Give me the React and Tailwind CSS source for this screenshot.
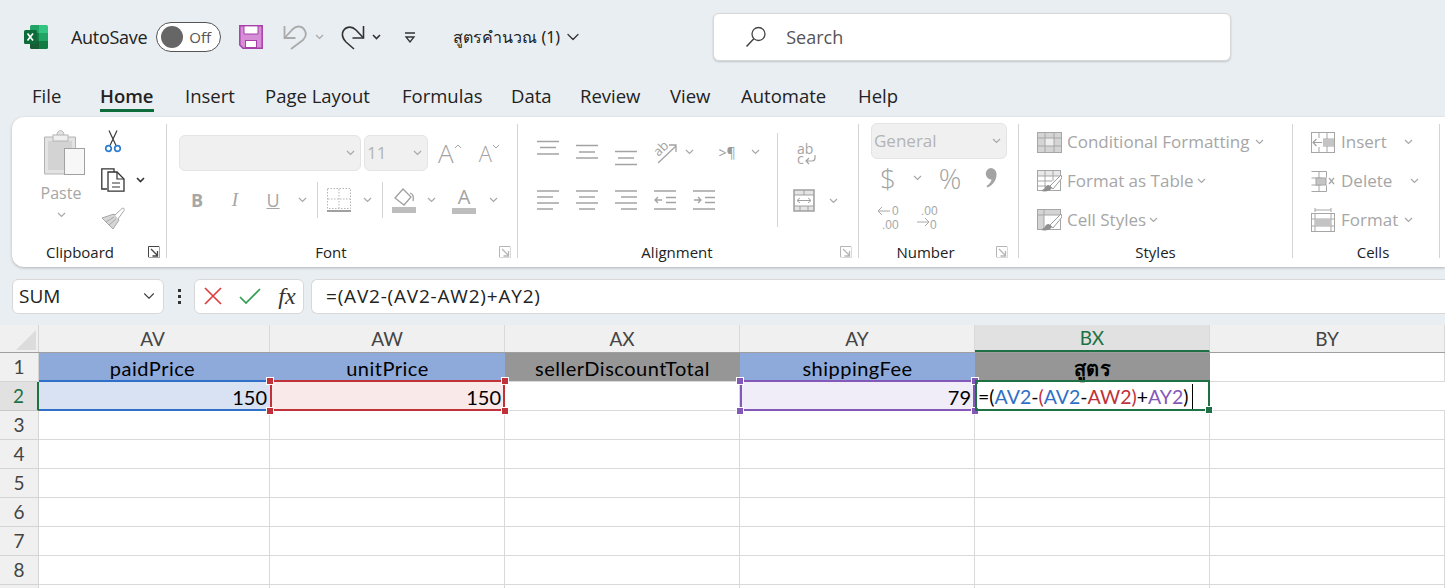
import { ChevronDown } from 'lucide-react';

function Svg({ w, h, children, className = '' }) {
  return (
    <svg width={w} height={h} viewBox={`0 0 ${w} ${h}`} fill="none" className={`shrink-0 ${className}`}>
      {children}
    </svg>
  );
}

function Chev({ dark, w = 9 }) {
  return (
    <Svg w={w} h={6}>
      <path d={`M1 1 L${w / 2} 4.5 L${w - 1} 1`} stroke={dark ? '#333' : '#a8a8a8'} strokeWidth={dark ? 1.6 : 1.2} />
    </Svg>
  );
}

function Box({ className = '', children }) {
  return <div className={`flex items-center justify-center shrink-0 ${className}`}>{children}</div>;
}

function Launcher({ dark }) {
  const c = dark ? '#444' : '#b5b5b5';
  return (
    <Svg w={12} h={12}>
      <path d="M.5 11V.5H11" stroke={c} />
      <path d="M3 3l6 6M9.5 5v5h-5" stroke={c} strokeWidth="1.3" />
      <path d="M.5 11.5h11v-11" stroke={c} opacity=".5" />
    </Svg>
  );
}

function Lines({ rows, w = 22, h = 16, color = '#a3a3a3' }) {
  return (
    <Svg w={w} h={h}>
      {rows.map(([a, b, y], i) => (
        <path key={i} d={`M${a} ${y}H${b}`} stroke={color} strokeWidth="1.5" />
      ))}
    </Svg>
  );
}

function ExcelLogo() {
  return (
    <Svg w={24} h={24}>
      <path d="M6 1.5A1.5 1.5 0 0 1 7.5 0H15v8H6z" fill="#21a366" />
      <path d="M15 0h7.5A1.5 1.5 0 0 1 24 1.5V8h-9z" fill="#33c481" />
      <rect x="6" y="8" width="9" height="8" fill="#107c41" />
      <rect x="15" y="8" width="9" height="8" fill="#21a366" />
      <path d="M6 16h9v8H7.5A1.5 1.5 0 0 1 6 22.5z" fill="#185c37" />
      <path d="M15 16h9v6.5a1.5 1.5 0 0 1-1.5 1.5H15z" fill="#107c41" />
      <rect x="0" y="5" width="13" height="14" rx="1.5" fill="#0c6b39" />
      <path d="M3.5 8.5l5.500 7M9 8.5l-5.500 7" stroke="#fff" strokeWidth="1.7" />
    </Svg>
  );
}

function SaveIcon() {
  return (
    <Svg w={24} h={24}>
      <path d="M.8.8h22.400v22.400H4L.8 20z" fill="#d68fd7" stroke="#a63fa8" strokeWidth="1.5" />
      <rect x="5" y="1.500" width="14" height="7.500" fill="#fff" />
      <path d="M5 1v8h14V1" stroke="#a63fa8" />
      <rect x="6.500" y="15.500" width="11" height="7" fill="#fff" stroke="#a63fa8" />
    </Svg>
  );
}

function UndoIcon() {
  return (
    <Svg w={24} h={25}>
      <path d="M1.500 1v12h11" stroke="#aaa" strokeWidth="1.800" />
      <path d="M1.500 13L10 4C14 0 20 1 22 6C24 10 22 13 20 15L8 24" stroke="#aaa" strokeWidth="1.800" />
    </Svg>
  );
}

function RedoIcon() {
  return (
    <Svg w={25} h={25}>
      <path d="M22.500 1v12h-11" stroke="#333" strokeWidth="1.600" />
      <path d="M22.500 13L15 5C10 0 3 2 1.500 8C1 12 3 15 5 17L13 24" stroke="#333" strokeWidth="1.600" />
    </Svg>
  );
}

function SearchIcon() {
  return (
    <Svg w={22} h={22}>
      <circle cx="13.5" cy="8" r="6.5" stroke="#444" strokeWidth="1.3" />
      <path d="M8.8 12.8L1.5 20.5" stroke="#444" strokeWidth="1.5" />
    </Svg>
  );
}

function PasteIcon() {
  return (
    <Svg w={41} h={45}>
      <path d="M.5 7H13V5c0-3 2-4.500 3.500-4.500S20 2 20 5v2h11.500v37H.5z" fill="#e3e3e3" stroke="#b4b4b4" />
      <rect x="4" y="11" width="24" height="29" fill="#d3d3d3" />
      <rect x="9" y="5" width="15" height="6" fill="#efefef" stroke="#b4b4b4" />
      <rect x="20.5" y="18.5" width="20" height="26" fill="#f7f7f7" stroke="#a0a0a0" />
    </Svg>
  );
}

function CutIcon() {
  return (
    <Svg w={16} h={23}>
      <path d="M4 .5l7 15M12 .5L5 15.5" stroke="#3b3b3b" strokeWidth="1.2" />
      <circle cx="3.5" cy="18.5" r="2.8" stroke="#2b7cd3" strokeWidth="1.7" />
      <circle cx="12.5" cy="18.5" r="2.8" stroke="#2b7cd3" strokeWidth="1.7" />
    </Svg>
  );
}

function CopyIcon() {
  return (
    <Svg w={24} h={24}>
      <path d="M6 21H.8V.8H13V4" stroke="#333" strokeWidth="1.3" />
      <path d="M7 4h9l7 7v12.200H7z" fill="#fff" stroke="#333" strokeWidth="1.3" />
      <path d="M16 4v7h7M11 15h8M11 19h8" stroke="#333" strokeWidth="1.2" />
    </Svg>
  );
}

function BrushIcon() {
  return (
    <Svg w={24} h={23}>
      <path d="M1 11l12-4 5 6-6 9z" fill="#d6d6d6" stroke="#a8a8a8" />
      <path d="M5 15l8-5M8 18l7-6" stroke="#a8a8a8" />
      <path d="M14 8l7-6.500c1-1 3 0 2 2L17 12" fill="#fff" stroke="#a8a8a8" />
    </Svg>
  );
}

function BorderIcon() {
  return (
    <Svg w={24} h={24}>
      <rect x=".5" y=".5" width="23" height="20" stroke="#b5b5b5" strokeDasharray="1.5 1.5" />
      <path d="M12 1v19M1 11h22" stroke="#b5b5b5" strokeDasharray="1.5 1.5" />
      <path d="M0 23h24" stroke="#a0a0a0" strokeWidth="2" />
    </Svg>
  );
}

function FillIcon() {
  return (
    <Svg w={24} h={26}>
      <path d="M3 11l8-9 8 8-7 8z" fill="#fff" stroke="#a0a0a0" strokeWidth="1.3" />
      <path d="M18 6c3 1 4 4 3 8" stroke="#a0a0a0" strokeWidth="1.3" />
      <rect x="0" y="20" width="24" height="6" fill="#bdbdbd" />
    </Svg>
  );
}

function OrientIcon() {
  return (
    <Svg w={32} h={32} className="m-[-4px]">
      <text x="5" y="18" fontSize="13" fill="#a3a3a3" transform="rotate(-45 11 14)" fontFamily="Open Sans">ab</text>
      <path d="M9 27L27 10M20 9h7v7" stroke="#a3a3a3" strokeWidth="1.3" />
    </Svg>
  );
}

function WrapIcon() {
  return (
    <Svg w={20} h={30} className="my-[-4px]">
      <text x="0" y="15" fontSize="14" fill="#a3a3a3" fontFamily="Open Sans">ab</text>
      <text x="0" y="25" fontSize="14" fill="#a3a3a3" fontFamily="Open Sans">c</text>
      <path d="M18 16v3a3 3 0 0 1-3 3H9M12 19l-3 3 3 3" stroke="#a3a3a3" strokeWidth="1.2" />
    </Svg>
  );
}

function MergeIcon() {
  return (
    <Svg w={22} h={23}>
      <rect x="1" y="1" width="20" height="21" fill="#e4e4e4" stroke="#a0a0a0" strokeWidth="1.5" />
      <rect x="2" y="6" width="18" height="11" fill="#fff" />
      <path d="M1 6h20M1 17h20M11 1v5M7 17v5M15 17v5" stroke="#a0a0a0" />
      <path d="M4 11.5h14M7 9l-3 2.5L7 14M15 9l3 2.5L15 14" stroke="#a0a0a0" />
    </Svg>
  );
}

function DecIcon({ more }) {
  return (
    <Svg w={24} h={34} className="my-[-4px]">
      {more ? (
        <>
          <text x="5" y="15" fontSize="12" fill="#a8a8a8" fontFamily="Liberation Sans">.00</text>
          <path d="M1 22h12M9 18l4 4-4 4" stroke="#a8a8a8" />
          <text x="14" y="29" fontSize="12" fill="#a8a8a8" fontFamily="Liberation Sans">0</text>
        </>
      ) : (
        <>
          <path d="M1 11h12M5 7l-4 4 4 4" stroke="#a8a8a8" />
          <text x="15" y="15" fontSize="12" fill="#a8a8a8" fontFamily="Liberation Sans">0</text>
          <text x="5" y="29" fontSize="12" fill="#a8a8a8" fontFamily="Liberation Sans">.00</text>
        </>
      )}
    </Svg>
  );
}

// grid-ish glyphs for the Styles and Cells groups
function CondIcon() {
  return (
    <Svg w={25} h={21}>
      <rect x=".5" y=".5" width="24" height="20" fill="#d4d4d4" stroke="#a6a6a6" />
      <rect x="8" y="6" width="9" height="8" fill="#ededed" />
      <path d="M1 6h23M1 14h23M8 1v19M17 1v19" stroke="#a6a6a6" />
    </Svg>
  );
}

function Brush() {
  return (
    <>
      <path d="M24 5L13 16l3 3L25 8z" fill="#fff" stroke="#9c9c9c" />
      <path d="M12 15c-3 0-4 2-4 3l-4 3c5 1 9 0 11-3z" fill="#8f8f8f" />
    </>
  );
}

function TableIcon({ cell }) {
  return (
    <Svg w={25} h={22}>
      <rect x=".5" y=".5" width="23" height="20" stroke="#a6a6a6" />
      {cell ? (
        <>
          <rect x="1" y="1" width="6" height="19" fill="#d4d4d4" />
          <rect x="1" y="1" width="22" height="5" fill="#d4d4d4" />
          <path d="M1 6h22M7 1v19" stroke="#a6a6a6" />
        </>
      ) : (
        <>
          <rect x="1" y="1" width="22" height="5" fill="#e8e8e8" />
          <path d="M1 6h22M1 11h14M1 16h8M8 1v19M16 1v10" stroke="#a6a6a6" />
        </>
      )}
      <Brush />
    </Svg>
  );
}

function InsertIcon() {
  return (
    <Svg w={24} h={21}>
      <rect x=".5" y=".5" width="23" height="20" stroke="#a6a6a6" />
      <path d="M8 1v19M16 1v19M1 7h22M1 14h22" stroke="#a6a6a6" />
      <rect x="12" y="7" width="11" height="7" fill="#c4c4c4" />
      <rect x="1" y="6" width="11" height="9" fill="#fff" />
      <path d="M11 10.5H2M5.5 7L2 10.5 5.5 14" stroke="#a0a0a0" strokeWidth="1.2" />
    </Svg>
  );
}

function DeleteIcon() {
  return (
    <Svg w={24} h={21}>
      <path d="M.5.5h15v6M.5 20.5h15v-6M.5 7h10M.5 14h10M8 1v6M8 14v6" stroke="#a6a6a6" />
      <rect x="5" y="7" width="10" height="7" fill="#c4c4c4" stroke="#a6a6a6" />
      <path d="M18 7l5 6M23 7l-5 6" stroke="#a6a6a6" strokeWidth="1.3" />
    </Svg>
  );
}

function FormatIcon() {
  return (
    <Svg w={24} h={24}>
      <path d="M4 4V0M20 4V0M4 2h16" stroke="#a6a6a6" />
      <rect x=".5" y="5.5" width="23" height="18" stroke="#a6a6a6" />
      <path d="M4 6v17M20 6v17M1 11h22M1 18h22" stroke="#a6a6a6" />
      <rect x="4" y="11" width="16" height="7" fill="#c4c4c4" />
    </Svg>
  );
}

function CommaIcon() {
  return (
    <Svg w={13} h={20}>
      <path d="M6.500 0a6 6 0 0 1 6 6.500c0 6-4 11-9 13l-1-1.500c3-2 5-4.500 5-6.500A5.800 5.800 0 0 1 6.500 0z" fill="#a3a3a3" />
    </Svg>
  );
}

function Select({ className = '', text }) {
  return (
    <div className={`flex items-center justify-between rounded-[6px] bg-[#f0f0f0] border border-[#e4e4e4] shrink-0 ${className}`}>
      <span className="pl-[2px] text-[17px] text-[#b4b4b4]">{text}</span>
      <span className="pr-[5px]"><Chev /></span>
    </div>
  );
}

function VSep({ className = '' }) {
  return <div className={`w-px bg-[#d4d4d4] shrink-0 ${className}`} />;
}

function Group({ className, label, launcher, dark, labelClass = '', children }) {
  return (
    <div className={`shrink-0 pt-[7px] ${className}`}>
      <div className="flex flex-col h-[134px] border-r border-[#d4d4d4]">
        <div className="flex-1 min-h-0">{children}</div>
        <div className={`flex items-center h-[27px] pt-[15px] ${labelClass}`}>
          <span className="flex-1 text-center text-[15px] text-[#222]">{label}</span>
          {launcher && <span className="flex justify-center w-[22px] pr-[2px]"><Launcher dark={dark} /></span>}
        </div>
      </div>
    </div>
  );
}

function ClipboardGroup() {
  return (
    <Group className="w-[155px]" label="Clipboard" launcher dark labelClass="pl-[4px]">
      <div className="flex pl-[20px]">
        <div className="flex flex-col items-center w-[58px] pt-[6px]">
          <div className="pl-[7px]"><PasteIcon /></div>
          <span className="mt-[6px] text-[16px] leading-[24px] text-[#a6a6a6]">Paste</span>
          <div className="mt-[7px]"><Chev /></div>
        </div>
        <div className="flex flex-col ml-[11px] pt-[6px]">
          <div className="pl-[4px]"><CutIcon /></div>
          <div className="flex items-center mt-[15px]">
            <CopyIcon />
            <div className="ml-[11px]"><Chev dark /></div>
          </div>
          <div className="mt-[15px]"><BrushIcon /></div>
        </div>
      </div>
    </Group>
  );
}

function FontGroup() {
  return (
    <Group className="w-[351px]" label="Font" launcher>
      <div className="flex flex-col pl-[12px] pt-[11px]">
        <div className="flex items-center">
          <Select className="w-[182px] h-[36px]" text="" />
          <Select className="w-[64px] h-[36px] ml-[3px]" text="11" />
          <span className="ml-[10px] text-[26px] font-light leading-[36px] text-[#a3a3a3]">A</span>
          <span className="mb-[14px]"><Svg w={8} h={5}><path d="M1 4l3-3 3 3" stroke="#a3a3a3" /></Svg></span>
          <span className="ml-[17px] text-[22px] font-light leading-[36px] text-[#a3a3a3]">A</span>
          <span className="mb-[14px]"><Svg w={8} h={5}><path d="M1 1l3 3 3-3" stroke="#a3a3a3" /></Svg></span>
        </div>
        <div className="flex items-center h-[36px] mt-[11px]">
          <Box className="w-[36px] font-bold text-[18px] text-[#a6a6a6]">B</Box>
          <Box className="w-[40px] italic text-[19px] text-[#a6a6a6] font-['Liberation_Serif',serif]">I</Box>
          <Box className="w-[36px] underline text-[18px] text-[#a6a6a6]">U</Box>
          <Box className="w-[22px]"><Chev /></Box>
          <Box className="w-[8px]"><VSep className="h-[36px]" /></Box>
          <Box className="w-[36px]"><BorderIcon /></Box>
          <Box className="w-[20px]"><Chev /></Box>
          <Box className="w-[10px]"><VSep className="h-[36px]" /></Box>
          <Box className="w-[34px]"><FillIcon /></Box>
          <Box className="w-[20px]"><Chev /></Box>
          <Box className="w-[46px] flex-col">
            <span className="text-[20px] leading-[22px] text-[#a3a3a3]">A</span>
            <span className="w-[24px] h-[6px] bg-[#bdbdbd]" />
          </Box>
          <Box className="w-[12px]"><Chev /></Box>
        </div>
      </div>
    </Group>
  );
}

function AlignmentGroup() {
  return (
    <Group className="w-[341px]" label="Alignment" launcher>
      <div className="flex">
        <div className="flex flex-col pl-[10px] pt-[16px] w-[259px]">
          <div className="flex items-start h-[24px]">
            <Box className="w-[39px]"><Lines h={26} rows={[[0, 22, 1.5], [3, 19, 7.5], [0, 22, 14]]} /></Box>
            <Box className="w-[39px]"><Lines h={26} rows={[[0, 22, 5.5], [3, 19, 12], [0, 22, 18]]} /></Box>
            <Box className="w-[39px]"><Lines h={26} rows={[[0, 22, 11.5], [3, 19, 18], [0, 22, 24.5]]} /></Box>
            <Box className="w-[39px]"><OrientIcon /></Box>
            <Box className="w-[10px] h-[24px]"><Chev /></Box>
            <Box className="w-[46px] h-[24px] ml-[10px] text-[14px] text-[#9a9a9a]">{'>¶'}</Box>
            <Box className="w-[10px] h-[24px]"><Chev /></Box>
          </div>
          <div className="flex items-center h-[24px] mt-[24px]">
            <Box className="w-[39px]"><Lines h={20} rows={[[0, 22, 1], [0, 16, 7], [0, 22, 13], [0, 16, 19]]} /></Box>
            <Box className="w-[39px]"><Lines h={20} rows={[[0, 22, 1], [3, 19, 7], [0, 22, 13], [3, 19, 19]]} /></Box>
            <Box className="w-[39px]"><Lines h={20} rows={[[0, 22, 1], [6, 22, 7], [0, 22, 13], [6, 22, 19]]} /></Box>
            <Box className="w-[39px]">
              <Svg w={22} h={20}>
                <path d="M0 1h22M12 7.5h10M12 12.5h10M0 19h22M1 10h7M4 7l-3 3 3 3" stroke="#a3a3a3" strokeWidth="1.3" />
              </Svg>
            </Box>
            <Box className="w-[39px]">
              <Svg w={22} h={20}>
                <path d="M0 1h22M12 7.5h10M12 12.5h10M0 19h22M1 10h7M5 7l3 3-3 3" stroke="#a3a3a3" strokeWidth="1.3" />
              </Svg>
            </Box>
          </div>
        </div>
        <div className="flex items-start pt-[9px]"><VSep className="h-[94px]" /></div>
        <div className="flex flex-col pt-[19px] pl-[15px]">
          <div className="pl-[4px]"><WrapIcon /></div>
          <div className="flex items-center mt-[24px]">
            <MergeIcon />
            <div className="ml-[14px]"><Chev /></div>
          </div>
        </div>
      </div>
    </Group>
  );
}

function NumberGroup() {
  return (
    <Group className="w-[160px]" label="Number" launcher labelClass="pr-[4px]">
      <div className="flex flex-col pl-[12px]">
        <Select className="w-[136px] h-[36px] mt-[-1px]" text="General" />
        <div className="flex items-center h-[36px] mt-[1px]">
          <Box className="w-[34px] text-[28px] font-light text-[#a3a3a3]">$</Box>
          <Box className="w-[24px]"><Chev /></Box>
          <Box className="w-[42px] text-[28px] font-light text-[#a3a3a3]">%</Box>
          <Box className="w-[38px]"><CommaIcon /></Box>
        </div>
        <div className="flex items-center mt-[8px] pl-[6px]">
          <DecIcon />
          <div className="ml-[15px]"><DecIcon more /></div>
        </div>
      </div>
    </Group>
  );
}

function MenuRow({ icon, label, chevClass }) {
  return (
    <div className="flex items-center h-[24px]">
      <Box className="w-[24px]">{icon}</Box>
      <span className="ml-[6px] text-[17px] text-[#a6a6a6] whitespace-nowrap">{label}</span>
      <span className={chevClass}><Chev /></span>
    </div>
  );
}

function StylesGroup() {
  return (
    <Group className="w-[274px]" label="Styles">
      <div className="flex flex-col gap-[15px] pl-[18px] pt-[6px]">
        <MenuRow icon={<CondIcon />} label="Conditional Formatting" chevClass="ml-[6px]" />
        <MenuRow icon={<TableIcon />} label="Format as Table" chevClass="ml-[3px]" />
        <MenuRow icon={<TableIcon cell />} label="Cell Styles" chevClass="ml-[3px]" />
      </div>
    </Group>
  );
}

function CellsGroup() {
  return (
    <Group className="w-[147px]" label="Cells" labelClass="pl-[14px]">
      <div className="flex flex-col gap-[15px] pl-[18px] pt-[6px]">
        <MenuRow icon={<InsertIcon />} label="Insert" chevClass="ml-[17px]" />
        <MenuRow icon={<DeleteIcon />} label="Delete" chevClass="ml-[18px]" />
        <MenuRow icon={<FormatIcon />} label="Format" chevClass="ml-[6px]" />
      </div>
    </Group>
  );
}

const TABS = [
  ['File', 'w-[68px]'],
  ['Home', 'w-[85px]'],
  ['Insert', 'w-[80px]'],
  ['Page Layout', 'w-[137px]'],
  ['Formulas', 'w-[109px]'],
  ['Data', 'w-[69px]'],
  ['Review', 'w-[90px]'],
  ['View', 'w-[71px]'],
  ['Automate', 'w-[117px]'],
  ['Help', 'w-[50px]'],
];

const COLS = ['AV', 'AW', 'AX', 'AY', 'BX', 'BY'];
const WIDTHS = ['w-[231px]', 'w-[235px]', 'w-[235px]', 'w-[235px]', 'w-[235px]', 'flex-1'];
const HEAD = [
  ['paidPrice', 'bg-[#8eaadb] pr-[4px]'],
  ['unitPrice', 'bg-[#8eaadb]'],
  ['sellerDiscountTotal', 'bg-[#969696]'],
  ['shippingFee', 'bg-[#8eaadb]'],
  ['สูตร', 'bg-[#969696] font-bold'],
  ['', 'bg-white'],
];

function Handle({ className }) {
  return <span className={`absolute w-[6px] h-[6px] border border-white box-content ${className}`} />;
}

function RowHead({ n, active }) {
  return (
    <div className={`w-[39px] h-full shrink-0 flex items-center justify-center text-[19px] border-b ${active ? 'bg-[#e1e1e1] text-[#1e7145] border-r-2 border-r-[#1e7145] border-b-[#c8c8c8]' : 'bg-[#f0f0f0] text-[#444] border-r border-[#d4d4d4]'}`}>
      {n}
    </div>
  );
}

function SheetRow({ n }) {
  return (
    <div className="flex h-[29px]">
      <RowHead n={n} />
      {WIDTHS.map((w, i) => <div key={i} className={`${w} h-full border-r border-b border-[#d9d9d9]`} />)}
    </div>
  );
}

function Sheet() {
  return (
    <div className="h-[263px] overflow-hidden bg-white font-['Lato','Open_Sans',sans-serif]">
      <div className="flex h-[28px] bg-[#f0f0f0] border-b border-[#9f9f9f]">
        <div className="w-[39px] shrink-0 flex items-end justify-end pr-[2px] pb-[2px] border-r border-[#d4d4d4]">
          <div className="w-0 h-0 border-l-[20px] border-l-transparent border-b-[20px] border-b-[#dcdcdc]" />
        </div>
        {COLS.map((c, i) => (
          <div
            key={c}
            className={`${WIDTHS[i]} flex items-center justify-center pt-[1px] text-[19px] border-r border-[#d9d9d9] ${c === 'AV' ? 'pr-[3px]' : ''} ${c === 'BX' ? 'bg-[#e1e1e1] text-[#1e7145] border-b-2 border-b-[#1e7145]' : 'text-[#444]'}`}
          >
            {c}
          </div>
        ))}
      </div>

      <div className="flex h-[29px]">
        <RowHead n={1} />
        {HEAD.map(([t, bg], i) => (
          <div
            key={i}
            className={`${WIDTHS[i]} ${bg} flex items-center justify-center pt-[1px] text-[20px] tracking-[0.5px] text-black border-b border-[#d9d9d9] ${i === 5 ? 'border-r' : ''}`}
          >
            {t}
          </div>
        ))}
      </div>

      <div className="flex h-[29px]">
        <RowHead n={2} active />
        <div className="relative w-[231px] h-full bg-[#d9e2f3] flex items-center justify-end pr-[3px] text-[20px] text-black">
          150
          <span className="absolute inset-x-0 top-[-2px] bottom-0 border-y-2 border-[#2f6fc7]" />
        </div>
        <div className="relative w-[235px] h-full bg-[#f9e9e9] flex items-center justify-end pr-[4px] text-[20px] text-black">
          150
          <span className="absolute inset-x-0 top-[-2px] bottom-0 border-2 border-[#c0313a]" />
          <Handle className="bg-[#c0313a] left-[-4px] top-[-5px]" />
          <Handle className="bg-[#c0313a] right-[-4px] top-[-5px]" />
          <Handle className="bg-[#c0313a] left-[-4px] bottom-[-4px]" />
          <Handle className="bg-[#c0313a] right-[-4px] bottom-[-4px]" />
        </div>
        <div className="w-[235px] h-full border-b border-r border-[#d9d9d9]" />
        <div className="relative w-[235px] h-full bg-[#f0ecf8] flex items-center justify-end pr-[4px] text-[20px] text-black">
          79
          <span className="absolute inset-x-0 top-[-2px] bottom-0 border-2 border-[#8458b8]" />
          <Handle className="bg-[#8458b8] left-[-4px] top-[-5px]" />
          <Handle className="bg-[#8458b8] right-[-4px] top-[-5px]" />
          <Handle className="bg-[#8458b8] left-[-4px] bottom-[-4px]" />
          <Handle className="bg-[#8458b8] right-[-4px] bottom-[-4px]" />
        </div>
        <div className="relative w-[235px] h-full flex items-center pl-[3px] text-[19.5px] text-black whitespace-nowrap">
          =(<span className="text-[#2f6fc7]">AV2</span>-<span className="text-[#c0313a]">(</span><span className="text-[#2f6fc7]">AV2</span>-<span className="text-[#c0313a]">AW2)</span>+<span className="text-[#8458b8]">AY2</span>)
          <span className="w-px h-[25px] bg-black ml-[3px]" />
          <span className="absolute inset-x-0 top-[-2px] bottom-0 border-2 border-[#1e7145]" />
          <span className="absolute right-[-3px] bottom-[-3px] w-[6px] h-[6px] bg-[#1e7145] border border-white box-content" />
        </div>
        <div className="flex-1 h-full border-b border-[#d9d9d9]" />
      </div>

      {[3, 4, 5, 6, 7, 8, ''].map((n) => <SheetRow key={n} n={n} />)}
    </div>
  );
}

export default function App() {
  return (
    <div className="w-[1445px] h-[588px] overflow-hidden bg-[#e9eef2] text-[#222] font-['Open_Sans',sans-serif]">
      {/* title bar */}
      <div className="flex items-center h-[74px] pl-[24px]">
        <ExcelLogo />
        <span className="ml-[23px] text-[18px] tracking-[-0.3px]">AutoSave</span>
        <div className="flex items-center w-[65px] h-[30px] ml-[9px] rounded-full border border-[#555] bg-white pl-[4px]">
          <span className="w-[22px] h-[22px] rounded-full bg-[#666]" />
          <span className="ml-[6px] text-[15px] text-[#555]">Off</span>
        </div>
        <div className="ml-[18px]"><SaveIcon /></div>
        <div className="ml-[20px]"><UndoIcon /></div>
        <div className="ml-[8px]"><Chev /></div>
        <div className="ml-[17px]"><RedoIcon /></div>
        <div className="ml-[6px]"><Chev dark /></div>
        <div className="ml-[23px]">
          <Svg w={12} h={11}><path d="M1 1h10M2 5h8l-4 5z" stroke="#333" strokeWidth="1.3" /></Svg>
        </div>
        <span className="ml-[37px] w-[107px] text-[16px] whitespace-nowrap font-['Noto_Sans','DejaVu_Sans',sans-serif]">สูตรคำนวณ (1)</span>
        <div className="ml-[3px]"><ChevronDown size={20} strokeWidth={1.5} color="#333" /></div>
        <div className="flex items-center w-[518px] h-[48px] ml-[130px] rounded-[6px] bg-white border border-[#d8d8d8] shadow-[0_1px_2px_rgba(0,0,0,0.18)] pl-[31px]">
          <SearchIcon />
          <span className="ml-[19px] text-[18px] text-[#555]">Search</span>
        </div>
      </div>

      {/* tabs */}
      <div className="flex items-start h-[43px] pl-[32px] pt-[9px]">
        {TABS.map(([t, w]) => (
          <div key={t} className={`${w} shrink-0 text-[18.5px] leading-[26px] ${t === 'Home' ? 'font-semibold' : ''}`}>
            <span className={`inline-block border-b-[3px] ${t === 'Home' ? 'border-[#0e6b3a]' : 'border-transparent'}`}>{t}</span>
          </div>
        ))}
      </div>

      {/* ribbon */}
      <div className="flex h-[150px] ml-[12px] rounded-l-[12px] bg-white shadow-[0_1px_3px_rgba(0,0,0,0.25)]">
        <ClipboardGroup />
        <FontGroup />
        <AlignmentGroup />
        <NumberGroup />
        <StylesGroup />
        <CellsGroup />
      </div>

      {/* formula bar */}
      <div className="flex items-center h-[58px] pl-[12px]">
        <div className="flex items-center justify-between w-[152px] h-[35px] rounded-[6px] bg-white border border-[#d8d8d8] pl-[6px] pr-[5px]">
          <span className="text-[19px] pt-[1px]">SUM</span>
          <ChevronDown size={18} strokeWidth={1.5} color="#444" />
        </div>
        <Box className="w-[30px] flex-col gap-[3px]">
          <span className="w-[3px] h-[3px] bg-[#333]" />
          <span className="w-[3px] h-[3px] bg-[#333]" />
          <span className="w-[3px] h-[3px] bg-[#333]" />
        </Box>
        <div className="flex items-center w-[110px] h-[35px] rounded-[6px] bg-white border border-[#d8d8d8]">
          <Box className="w-[36px]">
            <Svg w={18} h={18}><path d="M1 1l16 16M17 1L1 17" stroke="#e03c3c" strokeWidth="1.7" /></Svg>
          </Box>
          <Box className="w-[38px]">
            <Svg w={22} h={16}><path d="M1 9l6 6L21 1" stroke="#2e9e4f" strokeWidth="1.7" /></Svg>
          </Box>
          <Box className="w-[36px] italic text-[24px] font-['Liberation_Serif',serif] text-[#333]">fx</Box>
        </div>
        <div className="flex items-center flex-1 h-[35px] ml-[7px] rounded-l-[6px] bg-white border border-r-0 border-[#d8d8d8] pl-[14px]">
          <span className="text-[19px] tracking-[0.8px] pt-[1px]">=(AV2-(AV2-AW2)+AY2)</span>
        </div>
      </div>

      <Sheet />
    </div>
  );
}
